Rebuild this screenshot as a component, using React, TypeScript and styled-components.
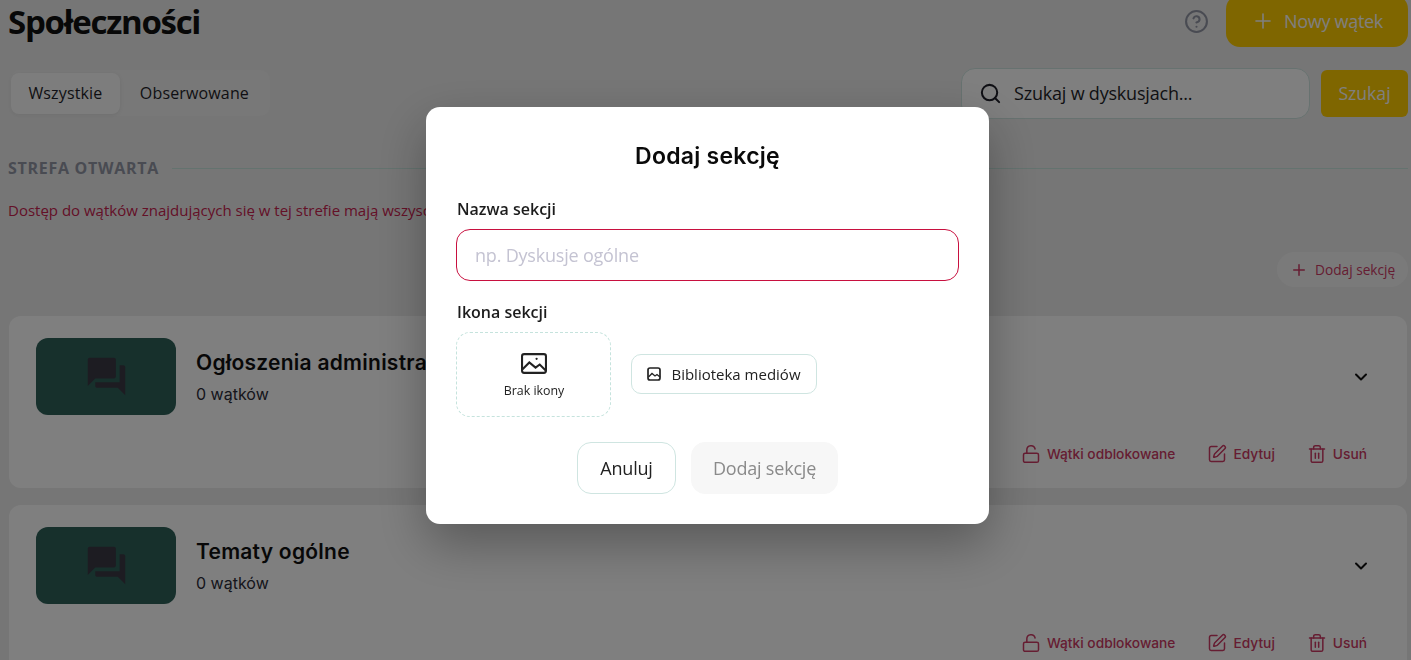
import React from 'react';
import styled, { createGlobalStyle } from 'styled-components';
import { ChevronDown, CircleHelp, LockOpen, Plus, Search, SquarePen, Trash2 } from 'lucide-react';
import { MdForum } from 'react-icons/md';

const GlobalStyle = createGlobalStyle`
  html, body {
    margin: 0;
    height: 100%;
    overflow: hidden;
    background: #ededed;
    font-family: "Open Sans", "Liberation Sans", sans-serif;
  }
  * { box-sizing: border-box; }
`;

const Page = styled.div`
  height: calc(100vh + 5px);
  margin-top: -5px;
  padding: 0 3px 0 8px;
  overflow: hidden;
`;

const Header = styled.div`
  display: flex;
  align-items: center;
  justify-content: space-between;
  height: 52px;
`;

const Title = styled.h1`
  margin: 0;
  font-size: 33px;
  font-weight: 700;
  letter-spacing: -1.3px;
  color: #111;
`;

const HeaderActions = styled.div`
  display: flex;
  align-items: center;
  gap: 17px;
`;

const HelpIcon = styled(CircleHelp)`
  width: 25px;
  height: 25px;
  color: #9296a5;
`;

const NewButton = styled.button`
  display: flex;
  align-items: center;
  justify-content: center;
  gap: 9px;
  width: 182px;
  height: 52px;
  border: 0;
  border-radius: 14px;
  background: #ffcc00;
  color: #fff;
  font: 400 18px "Open Sans", sans-serif;
  letter-spacing: -0.3px;
  padding: 0;
`;

const Toolbar = styled.div`
  display: flex;
  align-items: center;
  justify-content: space-between;
  margin-top: 21px;
  height: 50px;
`;

const Tabs = styled.div`
  display: flex;
  align-items: center;
  width: 260px;
  height: 46px;
  margin-left: 2px;
  padding: 0 1px;
  border-radius: 10px;
  background: #f0f0f0;
`;

const Tab = styled.div<{ $active?: boolean }>`
  display: flex;
  align-items: center;
  justify-content: center;
  width: ${(p) => (p.$active ? '109px' : 'auto')};
  height: 41px;
  padding: ${(p) => (p.$active ? '0' : '0 20px')};
  border-radius: 8px;
  background: ${(p) => (p.$active ? '#fbfbfb' : 'transparent')};
  box-shadow: ${(p) => (p.$active ? '0 1px 4px rgba(0,0,0,.08)' : 'none')};
  color: #1f1f29;
  font-size: 16px;
  letter-spacing: 0.15px;
`;

const SearchRow = styled.div`
  display: flex;
  align-items: center;
  gap: 11px;
`;

const SearchBox = styled.div`
  display: flex;
  align-items: center;
  gap: 12px;
  width: 349px;
  height: 51px;
  padding: 0 17px;
  border: 1px solid #cfe5e1;
  border-radius: 14px;
  background: #fff;
  color: #1f1f29;
  font-size: 18px;
  letter-spacing: -0.2px;
`;

const SearchButton = styled.button`
  width: 87px;
  height: 47px;
  border: 0;
  border-radius: 6px;
  background: #ffcc00;
  color: #fff;
  font: 400 17.6px "Open Sans", sans-serif;
`;

const ZoneHeader = styled.div`
  display: flex;
  align-items: center;
  gap: 13px;
  margin-top: 39px;
  color: #9296a5;
  font-size: 16px;
  font-weight: 700;
  letter-spacing: 0.72px;
  line-height: 22px;
`;

const ZoneLine = styled.div`
  flex: 1;
  height: 1px;
  background: #c9e6df;
`;

const ZoneNote = styled.p`
  margin: 20px 0 0;
  color: #c8224f;
  font-size: 15px;
  line-height: 22px;
  white-space: nowrap;
`;

const AddRow = styled.div`
  display: flex;
  justify-content: flex-end;
  margin-top: 31px;
`;

const AddButton = styled.div`
  display: flex;
  align-items: center;
  gap: 7px;
  width: 131px;
  height: 35px;
  padding-left: 13px;
  border-radius: 18px;
  background: #f5f5f5;
  color: #cc3a64;
  font-size: 13.7px;
`;

const CardList = styled.div`
  margin-top: 29px;
`;

const Card = styled.div`
  display: flex;
  flex-direction: column;
  height: 172px;
  margin: 0 1px 17px 1px;
  padding: 22px 27px 0;
  border-radius: 12px;
  background: #fff;
`;

const CardMain = styled.div`
  display: flex;
  align-items: flex-start;
  gap: 20px;
`;

const IconBox = styled.div`
  display: flex;
  align-items: center;
  justify-content: center;
  width: 140px;
  height: 77px;
  border-radius: 12px;
  background: #2e6059;
  color: #3a3844;
  font-size: 45px;
`;

const CardInfo = styled.div`
  flex: 1;
  padding-top: 11px;
`;

const CardTitle = styled.div`
  color: #111;
  font: 600 21px/28px "Inter", sans-serif;
  letter-spacing: 0.25px;
`;

const CardCount = styled.div`
  margin-top: 5px;
  color: #2c2c38;
  font: 400 16px/24px "Inter", sans-serif;
`;

const Chevron = styled(ChevronDown)`
  width: 20px;
  height: 20px;
  margin: 29px 9px 0 0;
  color: #111;
  stroke-width: 2.4;
`;

const CardActions = styled.div`
  display: flex;
  justify-content: flex-end;
  gap: 32px;
  margin-top: 29px;
  padding-right: 13px;
`;

const ActionLink = styled.div`
  display: flex;
  align-items: center;
  gap: 6px;
  color: #cc3a64;
  font: 450 13.75px/20px "Inter", sans-serif;

  svg {
    width: 20px;
    height: 20px;
    stroke-width: 1.8;
  }
`;

const Overlay = styled.div`
  position: fixed;
  inset: 0;
  display: flex;
  justify-content: center;
  align-items: flex-start;
  padding: 107px 0 0 4px;
  background: rgba(0, 0, 0, 0.5);
`;

const Modal = styled.div`
  display: flex;
  flex-direction: column;
  width: 563px;
  height: 417px;
  padding: 30px 30px 0;
  border-radius: 14px;
  background: #fff;
  box-shadow: 0 20px 50px rgba(0, 0, 0, 0.3);
`;

const ModalTitle = styled.h2`
  margin: 0;
  text-align: center;
  color: #0a0a0a;
  font: 600 23px/38px "Inter", sans-serif;
  letter-spacing: 0.25px;
`;

const FieldLabel = styled.div`
  color: #1c1c1c;
  font-size: 16px;
  font-weight: 600;
  line-height: 22px;
`;

const NameLabel = styled(FieldLabel)`
  margin-top: 23px;
  margin-left: 1px;
`;

const NameInput = styled.div`
  display: flex;
  align-items: center;
  width: 503px;
  height: 52px;
  margin-top: 9px;
  padding: 0 18px;
  border: 1px solid #c8103f;
  border-radius: 14px;
  color: #c4c3d2;
  font-size: 18px;
  letter-spacing: -0.2px;
`;

const IconLabel = styled(FieldLabel)`
  margin-top: 20px;
  margin-left: 1px;
`;

const IconRow = styled.div`
  display: flex;
  align-items: center;
  gap: 20px;
  margin-top: 9px;
`;

const DropZone = styled.div`
  display: flex;
  flex-direction: column;
  align-items: center;
  gap: 8px;
  width: 155px;
  height: 85px;
  padding: 20px 0 0 1px;
  border: 1px dashed #c5e3dd;
  border-radius: 14px;
  color: #222;
  font-size: 12.4px;
  line-height: 18px;
`;

const LibraryButton = styled.div`
  display: flex;
  align-items: center;
  justify-content: center;
  gap: 10px;
  width: 186px;
  height: 40px;
  margin-bottom: 1px;
  border: 1px solid #cfe5e1;
  border-radius: 10px;
  color: #222;
  font-size: 15px;
`;

const ModalFooter = styled.div`
  display: flex;
  justify-content: center;
  gap: 15px;
  margin-top: 25px;
`;

const FooterButton = styled.div<{ $disabled?: boolean }>`
  display: flex;
  align-items: center;
  justify-content: center;
  width: ${(p) => (p.$disabled ? '147px' : '99px')};
  height: 52px;
  border: 1px solid ${(p) => (p.$disabled ? '#f7f7f7' : '#cfe5e1')};
  border-radius: 14px;
  background: ${(p) => (p.$disabled ? '#f7f7f7' : '#fff')};
  color: ${(p) => (p.$disabled ? '#8a8a8a' : '#222')};
  font-size: 18px;
  letter-spacing: -0.2px;
`;

const PhotoIcon = () => (
  <svg width="26" height="21" viewBox="0 0 25 20" fill="none" stroke="currentColor" strokeWidth="2">
    <rect x="1" y="1" width="23" height="18" rx="2" />
    <path d="M1.5 15.5L8 9l6 5 4-3 6 6" />
    <circle cx="15" cy="5.5" r="1.1" fill="currentColor" stroke="none" />
  </svg>
);

const SmallPhotoIcon = () => (
  <svg width="14" height="14" viewBox="0 0 14 14" fill="none" stroke="currentColor" strokeWidth="1.7">
    <rect x="1" y="1" width="12" height="12" rx="2" />
    <path d="M1.5 10L5 6.5l3 2.5 2-1.5 3 2.5" strokeWidth="1.3" />
  </svg>
);

const sections = ['Ogłoszenia administracji', 'Tematy ogólne'];

const App: React.FC = () => {
  return (
    <>
      <GlobalStyle />
      <Page>
        <Header>
          <Title>Społeczności</Title>
          <HeaderActions>
            <HelpIcon strokeWidth={2} />
            <NewButton>
              <Plus size={24} strokeWidth={1.6} />
              Nowy wątek
            </NewButton>
          </HeaderActions>
        </Header>
        <Toolbar>
          <Tabs>
            <Tab $active>Wszystkie</Tab>
            <Tab>Obserwowane</Tab>
          </Tabs>
          <SearchRow>
            <SearchBox>
              <Search size={23} strokeWidth={2.1} />
              Szukaj w dyskusjach...
            </SearchBox>
            <SearchButton>Szukaj</SearchButton>
          </SearchRow>
        </Toolbar>
        <ZoneHeader>
          STREFA OTWARTA
          <ZoneLine />
        </ZoneHeader>
        <ZoneNote>Dostęp do wątków znajdujących się w tej strefie mają wszyscy użytkownicy społeczności.</ZoneNote>
        <AddRow>
          <AddButton>
            <Plus size={18} strokeWidth={2} />
            Dodaj sekcję
          </AddButton>
        </AddRow>
        <CardList>
          {sections.map((name) => (
            <Card key={name}>
              <CardMain>
                <IconBox>
                  <MdForum />
                </IconBox>
                <CardInfo>
                  <CardTitle>{name}</CardTitle>
                  <CardCount>0 wątków</CardCount>
                </CardInfo>
                <Chevron />
              </CardMain>
              <CardActions>
                <ActionLink>
                  <LockOpen />
                  Wątki odblokowane
                </ActionLink>
                <ActionLink>
                  <SquarePen />
                  Edytuj
                </ActionLink>
                <ActionLink>
                  <Trash2 />
                  Usuń
                </ActionLink>
              </CardActions>
            </Card>
          ))}
        </CardList>
      </Page>
      <Overlay>
        <Modal>
          <ModalTitle>Dodaj sekcję</ModalTitle>
          <NameLabel>Nazwa sekcji</NameLabel>
          <NameInput>np. Dyskusje ogólne</NameInput>
          <IconLabel>Ikona sekcji</IconLabel>
          <IconRow>
            <DropZone>
              <PhotoIcon />
              Brak ikony
            </DropZone>
            <LibraryButton>
              <SmallPhotoIcon />
              Biblioteka mediów
            </LibraryButton>
          </IconRow>
          <ModalFooter>
            <FooterButton>Anuluj</FooterButton>
            <FooterButton $disabled>Dodaj sekcję</FooterButton>
          </ModalFooter>
        </Modal>
      </Overlay>
    </>
  );
};

export default App;
